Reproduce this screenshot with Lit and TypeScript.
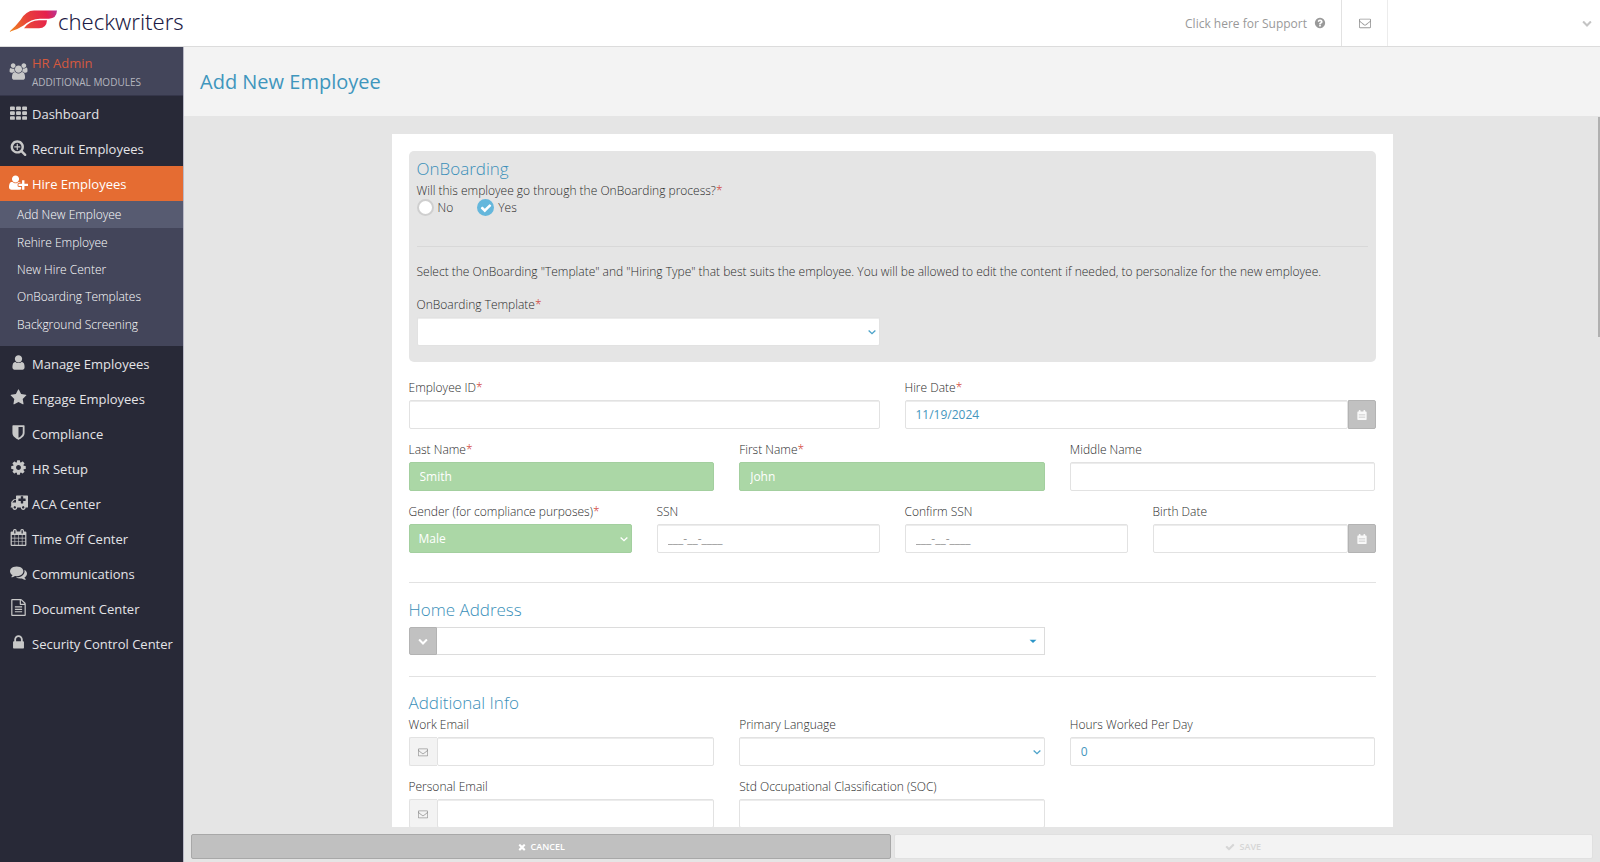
import { LitElement, html, css, svg, nothing } from "lit";
import { customElement, property, state } from "lit/decorators.js";
import { classMap } from "lit/directives/class-map.js";

interface Glyph {
  w: number;
  d: string;
}

const GLYPHS: Record<string, Glyph> = {
  group: {
    w: 2048,
    d: "M657 896q-162 5-265 128h-134q-82 0-138-40.5t-56-118.5q0-353 124-353 6 0 43.5 21t97.5 42.5 119 21.5q67 0 133-23-5 37-5 66 0 159 93 290zm1071 637q0 120-73 189.5t-194 69.5h-874q-121 0-194-69.5t-73-189.5q0-53 3.5-103.5t14-109 26.5-108.5 43-97.5 62-81 85.5-53.5 111.5-20q10 0 43 21.5t73 48 107 48 135 21.5 135-21.5 107-48 73-48 43-21.5q61 0 111.5 20t85.5 53.5 62 81 43 97.5 26.5 108.5 14 109 3.5 103.5zm-1024-1277q0 106-75 181t-181 75-181-75-75-181 75-181 181-75 181 75 75 181zm704 384q0 159-112.5 271.5t-271.5 112.5-271.5-112.5-112.5-271.5 112.5-271.5 271.5-112.5 271.5 112.5 112.5 271.5zm576 225q0 78-56 118.5t-138 40.5h-134q-103-123-265-128 93-131 93-290 0-29-5-66 66 23 133 23 59 0 119-21.5t97.5-42.5 43.5-21q124 0 124 353zm-128-609q0 106-75 181t-181 75-181-75-75-181 75-181 181-75 181 75 75 181z",
  },
  th: {
    w: 1792,
    d: "M96 256h320q96 0 96 96v192q0 96-96 96h-320q-96 0-96-96v-192q0-96 96-96zM736 256h320q96 0 96 96v192q0 96-96 96h-320q-96 0-96-96v-192q0-96 96-96zM1376 256h320q96 0 96 96v192q0 96-96 96h-320q-96 0-96-96v-192q0-96 96-96zM96 768h320q96 0 96 96v192q0 96-96 96h-320q-96 0-96-96v-192q0-96 96-96zM736 768h320q96 0 96 96v192q0 96-96 96h-320q-96 0-96-96v-192q0-96 96-96zM1376 768h320q96 0 96 96v192q0 96-96 96h-320q-96 0-96-96v-192q0-96 96-96zM96 1280h320q96 0 96 96v192q0 96-96 96h-320q-96 0-96-96v-192q0-96 96-96zM736 1280h320q96 0 96 96v192q0 96-96 96h-320q-96 0-96-96v-192q0-96 96-96zM1376 1280h320q96 0 96 96v192q0 96-96 96h-320q-96 0-96-96v-192q0-96 96-96z",
  },
  searchPlus: {
    w: 1792,
    d: "M1088 800v64q0 13-9.5 22.5t-22.5 9.5h-224v224q0 13-9.5 22.5t-22.5 9.5h-64q-13 0-22.5-9.5t-9.5-22.5v-224h-224q-13 0-22.5-9.5t-9.5-22.5v-64q0-13 9.5-22.5t22.5-9.5h224v-224q0-13 9.5-22.5t22.5-9.5h64q13 0 22.5 9.5t9.5 22.5v224h224q13 0 22.5 9.5t9.5 22.5zm128 32q0-185-131.5-316.5t-316.5-131.5-316.5 131.5-131.5 316.5 131.5 316.5 316.5 131.5 316.5-131.5 131.5-316.5zm512 832q0 53-37.5 90.5t-90.5 37.5q-54 0-90-38l-343-342q-179 124-399 124-143 0-273.5-55.5t-225-150-150-225-55.5-273.5 55.5-273.5 150-225 225-150 273.5-55.5 273.5 55.5 225 150 150 225 55.5 273.5q0 220-124 399l343 343q37 37 37 90z",
  },
  userPlus: {
    w: 2048,
    d: "M704 896q-159 0-271.5-112.5t-112.5-271.5 112.5-271.5 271.5-112.5 271.5 112.5 112.5 271.5-112.5 271.5-271.5 112.5zm960 128h352q13 0 22.5 9.5t9.5 22.5v192q0 13-9.5 22.5t-22.5 9.5h-352v352q0 13-9.5 22.5t-22.5 9.5h-192q-13 0-22.5-9.5t-9.5-22.5v-352h-352q-13 0-22.5-9.5t-9.5-22.5v-192q0-13 9.5-22.5t22.5-9.5h352v-352q0-13 9.5-22.5t22.5-9.5h192q13 0 22.5 9.5t9.5 22.5v352zm-736 224q0 52 38 90t90 38h256v238q-68 50-171 50h-874q-121 0-194-69t-73-190q0-53 3.5-103.5t14-109 26.5-108.5 43-97.5 62-81 85.5-53.5 111.5-20q19 0 39 17 79 61 154.5 91.5t164.5 30.5 164.5-30.5 154.5-91.5q20-17 39-17 132 0 217 96h-223q-52 0-90 38t-38 90v192z",
  },
  user: {
    w: 1792,
    d: "M1536 1399q0 109-62.5 187t-150.5 78h-854q-88 0-150.5-78t-62.5-187q0-85 8.5-160.5t31.5-152 58.5-131 94-89 134.5-34.5q131 128 313 128t313-128q76 0 134.5 34.5t94 89 58.5 131 31.5 152 8.5 160.5zm-256-887q0 159-112.5 271.5t-271.5 112.5-271.5-112.5-112.5-271.5 112.5-271.5 271.5-112.5 271.5 112.5 112.5 271.5z",
  },
  star: {
    w: 1792,
    d: "M1728 647q0 22-26 48l-363 354 86 500q1 7 1 20 0 21-10.5 35.5t-30.5 14.5q-19 0-40-12l-449-236-449 236q-22 12-40 12-21 0-31.5-14.5t-10.5-35.5q0-6 2-20l86-500-364-354q-25-27-25-48 0-37 56-46l502-73 225-455q19-41 49-41t49 41l225 455 502 73q56 9 56 46z",
  },
  shield: {
    w: 1792,
    d: "M1344 960v-640h-448v1137q119-63 213-137 235-184 235-360zm192-768v768q0 86-33.5 170.5t-83 150-118 127.5-126.5 103-121 77.5-89.5 49.5-42.5 20q-12 6-26 6t-26-6q-16-7-42.5-20t-89.5-49.5-121-77.5-126.5-103-118-127.5-83-150-33.5-170.5v-768q0-26 19-45t45-19h1152q26 0 45 19t19 45z",
  },
  cog: {
    w: 1792,
    d: "M1152 896q0-106-75-181t-181-75-181 75-75 181 75 181 181 75 181-75 75-181zm512-109v222q0 12-8 23t-20 13l-185 28q-19 54-39 91 35 50 107 138 10 12 10 25t-9 23q-27 37-99 108t-94 71q-12 0-26-9l-138-108q-44 23-91 38-16 136-29 186-7 28-36 28h-222q-14 0-24.5-8.5t-11.5-21.5l-28-184q-49-16-90-37l-141 107q-10 9-25 9-14 0-25-11-126-114-165-168-7-10-7-23 0-12 8-23 15-21 51-66.5t54-70.5q-27-50-41-99l-183-27q-13-2-21-12.5t-8-23.5v-222q0-12 8-23t19-13l186-28q14-46 39-92-40-57-107-138-10-12-10-24 0-10 9-23 26-36 98.5-107.5t94.5-71.5q13 0 26 10l138 107q44-23 91-38 16-136 29-186 7-28 36-28h222q14 0 24.5 8.5t11.5 21.5l28 184q49 16 90 37l142-107q9-9 24-9 13 0 25 10 129 119 165 170 7 8 7 22 0 12-8 23-15 21-51 66.5t-54 70.5q26 50 41 98l183 28q13 2 21 12.5t8 23.5z",
  },
  ambulance: {
    w: 1920,
    d: "M640 1408q0-52-38-90t-90-38-90 38-38 90 38 90 90 38 90-38 38-90zm-384-512h384v-256h-158q-14 2-22 9l-195 195q-7 12-9 22v30zm1280 512q0-52-38-90t-90-38-90 38-38 90 38 90 90 38 90-38 38-90zm128-704v-192q0-14-9-23t-23-9h-224v-224q0-14-9-23t-23-9h-192q-14 0-23 9t-9 23v224h-224q-14 0-23 9t-9 23v192q0 14 9 23t23 9h224v224q0 14 9 23t23 9h192q14 0 23-9t9-23v-224h224q14 0 23-9t9-23zm256-608v1280q0 26-19 45t-45 19h-192q0 106-75 181t-181 75-181-75-75-181h-384q0 106-75 181t-181 75-181-75-75-181h-128q-26 0-45-19t-19-45 19-45 45-19v-416q0-26 13-58t32-51l198-198q19-19 51-32t58-13h160v-320q0-26 19-45t45-19h1152q26 0 45 19t19 45z",
  },
  calendar: {
    w: 1792,
    d: "M192 1664h288v-288h-288v288zm352 0h320v-288h-320v288zm-352-352h288v-320h-288v320zm352 0h320v-320h-320v320zm-352-384h288v-288h-288v288zm736 736h320v-288h-320v288zm-384-736h320v-288h-320v288zm768 736h288v-288h-288v288zm-384-352h320v-320h-320v320zm-352-864v-288q0-13-9.5-22.5t-22.5-9.5h-64q-13 0-22.5 9.5t-9.5 22.5v288q0 13 9.5 22.5t22.5 9.5h64q13 0 22.5-9.5t9.5-22.5zm736 864h288v-320h-288v320zm-384-384h320v-288h-320v288zm384 0h288v-288h-288v288zm32-480v-288q0-13-9.5-22.5t-22.5-9.5h-64q-13 0-22.5 9.5t-9.5 22.5v288q0 13 9.5 22.5t22.5 9.5h64q13 0 22.5-9.5t9.5-22.5zm384-64v1280q0 52-38 90t-90 38h-1408q-52 0-90-38t-38-90v-1280q0-52 38-90t90-38h128v-96q0-66 47-113t113-47h64q66 0 113 47t47 113v96h384v-96q0-66 47-113t113-47h64q66 0 113 47t47 113v96h128q52 0 90 38t38 90z",
  },
  calendarSolid: {
    w: 1792,
    d: "M192 256h128v-128q0-128 128-128h64q128 0 128 128v128h512v-128q0-128 128-128h64q128 0 128 128v128h128q128 0 128 128v1280q0 128-128 128h-1408q-128 0-128-128v-1280q0-128 128-128zM320 800v140h1152v-140zM320 1200v140h1152v-140z",
  },
  comments: {
    w: 1792,
    d: "M1408 768q0 139-94 257t-256.5 186.5-353.5 68.5q-86 0-176-16-124 88-278 128-36 9-86 16h-3q-11 0-20.5-8t-11.5-21q-1-3-1-6.5t.5-6.5 2-6l2.5-5 3.5-5.5 4-5 4.5-5 4-4.5q5-6 23-25t26-29.5 22.5-29 25-38.5 20.5-44q-124-72-195-177t-71-224q0-139 94-257t256.5-186.5 353.5-68.5 353.5 68.5 256.5 186.5 94 257zm384 256q0 120-71 224.5t-195 176.5q10 24 20.5 44t25 38.5 22.5 29 26 29.5 23 25q1 1 4 4.5t4.5 5 4 5 3.5 5.5l2.5 5 2 6 .5 6.5-1 6.5q-3 14-13 22t-22 7q-50-7-86-16-154-40-278-128-90 16-176 16-271 0-472-132 58 4 88 4 161 0 309-45t264-129q125-92 192-212t67-254q0-77-23-152 129 71 204 178t75 230z",
  },
  fileText: {
    w: 1792,
    d: "M1596 380q28 28 48 76t20 88v1152q0 40-28 68t-68 28h-1344q-40 0-68-28t-28-68v-1600q0-40 28-68t68-28h896q40 0 88 20t76 48zm-444-244v376h376q-10-29-22-41l-313-313q-12-12-41-22zm384 1528v-1024h-416q-40 0-68-28t-28-68v-416h-768v1536h1280zm-1024-864q0-14 9-23t23-9h704q14 0 23 9t9 23v64q0 14-9 23t-23 9h-704q-14 0-23-9t-9-23v-64zm736 224q14 0 23 9t9 23v64q0 14-9 23t-23 9h-704q-14 0-23-9t-9-23v-64q0-14 9-23t23-9h704zm0 256q14 0 23 9t9 23v64q0 14-9 23t-23 9h-704q-14 0-23-9t-9-23v-64q0-14 9-23t23-9h704z",
  },
  lock: {
    w: 1792,
    d: "M640 768h512v-192q0-106-75-181t-181-75-181 75-75 181v192zm832 96v576q0 40-28 68t-68 28h-960q-40 0-68-28t-28-68v-576q0-40 28-68t68-28h32v-192q0-184 132-316t316-132 316 132 132 316v192h32q40 0 68 28t28 68z",
  },
  question: {
    w: 1792,
    d: "M1024 1376v-192q0-14-9-23t-23-9h-192q-14 0-23 9t-9 23v192q0 14 9 23t23 9h192q14 0 23-9t9-23zm256-672q0-88-55.5-163t-138.5-116-170-41q-243 0-371 213-15 24 8 42l132 100q7 6 19 6 16 0 25-12 53-68 86-92 34-24 86-24 48 0 85.5 26t37.5 59q0 38-20 61t-68 45q-63 28-115.5 86.5t-52.5 125.5v36q0 14 9 23t23 9h192q14 0 23-9t9-23q0-19 21.5-49.5t54.5-49.5q32-18 49-28.5t46-35 44.5-48 28-60.5 12.5-81zm384 192q0 209-103 385.5t-279.5 279.5-385.5 103-385.5-103-279.5-279.5-103-385.5 103-385.5 279.5-279.5 385.5-103 385.5 103 279.5 279.5 103 385.5z",
  },
  envelope: {
    w: 1792,
    d: "M1664 1504v-768q-32 36-69 66-268 206-426 338-51 43-83 67t-86.5 48.5-102.5 24.5h-2q-48 0-102.5-24.5t-86.5-48.5-83-67q-158-132-426-338-37-30-69-66v768q0 13 9.5 22.5t22.5 9.5h1472q13 0 22.5-9.5t9.5-22.5zm0-1051v-24.5l-.5-13-3-12.5-5.5-9-9-7.5-14-2.5h-1472q-13 0-22.5 9.5t-9.5 22.5q0 168 147 284 193 152 401 317 6 5 35 29.5t46 37.5 44.5 31.5 50.5 27.5 43 9h2q20 0 43-9t50.5-27.5 44.5-31.5 46-37.5 35-29.5q208-165 401-317 54-43 100.5-115.5t46.5-131.5zm128-37v1088q0 66-47 113t-113 47h-1472q-66 0-113-47t-47-113v-1088q0-66 47-113t113-47h1472q66 0 113 47t47 113z",
  },
  chevron: {
    w: 1792,
    d: "M1683 808l-742 741q-19 19-45 19t-45-19l-742-741q-19-19-19-45.5t19-45.5l166-165q19-19 45-19t45 19l531 531 531-531q19-19 45-19t45 19l166 165q19 19 19 45.5t-19 45.5z",
  },
  angle: {
    w: 1792,
    d: "M40 660L240 460L896 1080L1552 460L1752 660L896 1480z",
  },
  caret: {
    w: 1792,
    d: "M128 640h1536L896 1344z",
  },
  check: {
    w: 1792,
    d: "M1671 566q0 40-28 68l-724 724-136 136q-28 28-68 28t-68-28l-136-136-362-362q-28-28-28-68t28-68l136-136q28-28 68-28t68 28l294 295 656-657q28-28 68-28t68 28l136 136q28 28 28 68z",
  },
  times: {
    w: 1792,
    d: "M1490 1322q0 40-28 68l-136 136q-28 28-68 28t-68-28l-294-294-294 294q-28 28-68 28t-68-28l-136-136q-28-28-28-68t28-68l294-294-294-294q-28-28-28-68t28-68l136-136q28-28 68-28t68 28l294 294 294-294q28-28 68-28t68 28l136 136q28 28 28 68t-28 68l-294 294 294 294q28 28 28 68z",
  },
};

@customElement("cw-icon")
class CwIcon extends LitElement {
  static styles = css`
    :host {
      display: inline-flex;
      flex: none;
    }
    .glyph {
      display: block;
      fill: currentColor;
      fill-rule: evenodd;
      overflow: visible;
    }
  `;
  @property() name = "check";
  @property({ type: Number }) size = 14;

  render() {
    const g = GLYPHS[this.name];
    return html`<svg
      class="glyph"
      aria-hidden="true"
      width=${Math.round((g.w * this.size) / 1792)}
      height=${this.size}
      viewBox="0 0 ${g.w} 1792"
    >
      ${svg`<path d=${g.d}></path>`}
    </svg>`;
  }
}

@customElement("cw-sidebar")
class CwSidebar extends LitElement {
  static styles = css`
    :host {
      display: block;
      background: #282937;
      border-right: 1px solid #b9b9c6;
      overflow: hidden;
    }
    .module {
      display: flex;
      align-items: center;
      width: 100%;
      height: 49px;
      padding: 3px 0 0 8px;
      border: 0;
      border-bottom: 1px solid #35364a;
      background: #43455a;
      font-family: inherit;
      text-align: left;
    }
    .module cw-icon,
    .item cw-icon {
      justify-content: center;
      width: 21px;
      margin-right: 3px;
      color: #c8c8c8;
    }
    .module cw-icon {
      margin-bottom: 2px;
    }
    .module-text {
      display: grid;
    }
    .module-name {
      font-size: 13px;
      line-height: 20px;
      color: #d5593e;
    }
    .module-sub {
      font-size: 10px;
      line-height: 19px;
      color: #b4b5be;
    }
    ul {
      list-style: none;
      margin: 0;
      padding: 0;
    }
    a {
      color: inherit;
      text-decoration: none;
    }
    .item {
      box-sizing: border-box;
      display: flex;
      align-items: center;
      height: 35px;
      padding: 1px 0 0 8px;
      font-size: 13px;
      color: #e4e4e7;
      white-space: nowrap;
    }
    .item cw-icon {
      margin-bottom: 4px;
    }
    .item.open {
      background: #e56c32;
      color: #fff;
    }
    .item.open cw-icon {
      color: #fff;
    }
    .sub {
      display: grid;
      grid-auto-rows: 1fr;
      min-height: 137px;
      padding-bottom: 8px;
      background: #43455a;
      font-size: 12px;
      font-weight: 300;
      color: #fff;
    }
    .sub li {
      display: grid;
    }
    .sub a {
      display: flex;
      align-items: center;
      padding-left: 17px;
    }
    .sub a.current {
      background: #575b71;
    }
  `;

  private items = [
    ["th", "Dashboard"],
    ["searchPlus", "Recruit Employees"],
    ["userPlus", "Hire Employees"],
    ["user", "Manage Employees"],
    ["star", "Engage Employees"],
    ["shield", "Compliance"],
    ["cog", "HR Setup"],
    ["ambulance", "ACA Center"],
    ["calendar", "Time Off Center"],
    ["comments", "Communications"],
    ["fileText", "Document Center"],
    ["lock", "Security Control Center"],
  ];
  private subItems = [
    "Add New Employee",
    "Rehire Employee",
    "New Hire Center",
    "OnBoarding Templates",
    "Background Screening",
  ];
  @state() private open = "Hire Employees";

  render() {
    return html`
      <button class="module" type="button">
        <cw-icon name="group" .size=${17}></cw-icon>
        <span class="module-text">
          <span class="module-name">HR Admin</span>
          <span class="module-sub">ADDITIONAL MODULES</span>
        </span>
      </button>
      <nav aria-label="Modules">
        <ul>
          ${this.items.map(
            ([icon, label]) => html`<li>
              <a
                href="#"
                class=${classMap({ item: true, open: label === this.open })}
                ><cw-icon name=${icon} .size=${17}></cw-icon
                >${label}</a
              >
              ${label === this.open
                ? html`<ul class="sub">
                    ${this.subItems.map(
                      (s, i) =>
                        html`<li>
                          <a href="#" class=${classMap({ current: i === 0 })}>${s}</a>
                        </li>`
                    )}
                  </ul>`
                : nothing}
            </li>`
          )}
        </ul>
      </nav>
    `;
  }
}

type Kind = "text" | "select" | "date" | "email" | "number";

@customElement("cw-field")
class CwField extends LitElement {
  static styles = css`
    :host {
      display: grid;
      gap: 4px;
      min-width: 0;
    }
    label {
      font-size: 12px;
      line-height: 17px;
      white-space: nowrap;
    }
    .star {
      color: #d0342c;
    }
    .control {
      display: flex;
      position: relative;
      height: 29px;
    }
    .box {
      box-sizing: border-box;
      flex: 1;
      min-width: 0;
      height: 100%;
      margin: 0;
      padding: 0 10px;
      border: 1px solid #e2e2e2;
      border-radius: 2px;
      background: #fff;
      box-shadow: inset 0 1px 0 #ececec;
      font-family: inherit;
      font-size: 12px;
      color: #4596bd;
      appearance: none;
      outline: none;
    }
    .box::placeholder {
      color: #999;
      opacity: 1;
    }
    .box.done {
      border-color: #a3cf9f;
      background: #abd7a6;
      box-shadow: none;
      color: #fff;
    }
    select.box {
      padding: 0 9px;
    }
    .arrow {
      position: absolute;
      right: 4px;
      top: 11px;
      color: #4da3ca;
      pointer-events: none;
    }
    .arrow.light {
      color: #fff;
    }
    .addon {
      box-sizing: border-box;
      display: grid;
      place-items: center;
      width: 28px;
      height: 100%;
      padding: 0;
    }
    .addon.date {
      border: 1px solid #b3b3b3;
      border-radius: 0 2px 2px 0;
      background: #c1c1c1;
      color: #f8f8f8;
    }
    .addon.mail {
      border: 1px solid #e2e2e2;
      border-right: 0;
      border-radius: 2px 0 0 2px;
      background: #f3f3f3;
      color: #999;
    }
  `;
  @property() label = "";
  @property() value = "";
  @property() kind: Kind = "text";
  @property() hint = "";
  @property({ type: Boolean }) required = false;
  @property({ type: Boolean }) done = false;

  render() {
    const cls = classMap({ box: true, done: this.done });
    return html`
      <label for="f">${this.label}${this.required ? html`<span class="star">*</span>` : nothing}</label>
      <div class="control">
        ${this.kind === "email"
          ? html`<span class="addon mail"><cw-icon name="envelope" .size=${10}></cw-icon></span>`
          : nothing}
        ${this.kind === "select"
          ? html`<select id="f" class=${cls}>
                <option>${this.value}</option>
              </select>
              <cw-icon
                class=${classMap({ arrow: true, light: this.done })}
                name="angle"
                .size=${8}
              ></cw-icon>`
          : html`<input
              id="f"
              class=${cls}
              type=${this.kind === "email" ? "email" : "text"}
              inputmode=${this.kind === "number" ? "decimal" : "text"}
              placeholder=${this.hint}
              .value=${this.value}
            />`}
        ${this.kind === "date"
          ? html`<button class="addon date" type="button" aria-label="Open calendar">
              <cw-icon name="calendarSolid" .size=${10}></cw-icon>
            </button>`
          : nothing}
      </div>
    `;
  }
}

@customElement("app-root")
class AppRoot extends LitElement {
  static styles = css`
    :host {
      display: grid;
      grid-template: auto minmax(0, 1fr) / 184px minmax(0, 1fr);
      height: 100vh;
      font-family: "Open Sans", "Noto Sans", sans-serif;
      font-size: 12px;
      color: #555;
      background: #e5e5e5;
    }
    .top {
      grid-column: 1 / -1;
      display: flex;
      height: 46px;
      border-bottom: 1px solid #dcdcdc;
      background: #fff;
      color: #999;
    }
    .brand {
      display: flex;
      align-items: center;
      margin-right: auto;
      padding: 0 0 4px 9px;
      font-family: "Noto Sans", "Open Sans", sans-serif;
      font-size: 22px;
      font-weight: 300;
      line-height: 30px;
      color: #1d1b45;
      text-decoration: none;
    }
    .support {
      display: flex;
      align-items: center;
      gap: 7px;
      padding-right: 15px;
      border-right: 1px solid #e2e2e2;
      color: inherit;
      text-decoration: none;
    }
    .top-btn {
      display: grid;
      align-items: center;
      justify-content: center;
      width: 46px;
      padding: 0;
      border: 0;
      border-right: 1px solid #ececec;
      background: none;
      color: #999;
    }
    .account {
      justify-content: end;
      width: 212px;
      padding-right: 8px;
      border: 0;
      color: #c4c4c4;
    }
    main {
      display: grid;
      grid-template-rows: 69px minmax(0, 1fr) auto;
      min-height: 0;
      font-weight: 300;
      color: #2c2c2c;
    }
    h1 {
      display: flex;
      align-items: center;
      margin: 0;
      padding: 0 16px;
      background: #f3f3f3;
      font-size: 20px;
      line-height: 28px;
      font-weight: 400;
      color: #3f96bd;
    }
    .scroll {
      position: relative;
      overflow: hidden;
    }
    .thumb {
      position: absolute;
      top: 1px;
      right: 0;
      width: 2px;
      height: 31%;
      background: #b0b0b0;
    }
    .card {
      box-sizing: border-box;
      max-width: 1001px;
      margin: 18px auto 0;
      padding: 17px;
      background: #fff;
    }
    .panel {
      padding: 6px 8px 16px;
      border-radius: 5px;
      background: #e5e5e5;
    }
    h2 {
      margin: 0;
      font-size: 17px;
      line-height: 24px;
      font-weight: 300;
      color: #3a8fb9;
    }
    .panel h2,
    .info h2 {
      margin-bottom: 1px;
    }
    fieldset {
      margin: 0;
      padding: 0;
      border: 0;
    }
    legend {
      padding: 0;
      line-height: 17px;
    }
    .star {
      color: #d0342c;
    }
    .radios {
      display: flex;
      gap: 24px;
    }
    .radio {
      display: grid;
      grid-template-columns: 17px auto;
      column-gap: 4px;
      align-items: center;
      justify-items: center;
      line-height: 17px;
    }
    .radio input {
      grid-area: 1 / 1;
      box-sizing: border-box;
      width: 17px;
      height: 17px;
      margin: 0;
      border: 2px solid #cfcfcf;
      border-radius: 50%;
      background: #fff;
      appearance: none;
    }
    .radio input:checked {
      border-color: #65b7dc;
      background: #65b7dc;
    }
    .radio cw-icon {
      grid-area: 1 / 1;
      z-index: 1;
      color: #fff;
      pointer-events: none;
    }
    hr {
      width: 100%;
      height: 1px;
      margin: 0;
      border: 0;
      background: #e2e2e2;
    }
    .panel hr {
      margin: 30px 0 16px;
      background: #d8d8d8;
    }
    .note {
      margin: 0 0 16px;
      line-height: 17px;
    }
    .row {
      display: grid;
      gap: 12px 25px;
      margin-bottom: 12px;
    }
    .panel .row {
      margin: 0;
    }
    .c2 {
      grid-template-columns: repeat(2, minmax(0, 1fr));
    }
    .c3 {
      grid-template-columns: repeat(3, minmax(0, 1fr));
    }
    .c4 {
      grid-template-columns: repeat(4, minmax(0, 1fr));
    }
    .fields {
      padding: 17px 0;
    }
    .address {
      padding: 15px 0 21px;
    }
    .info {
      padding-top: 14px;
    }
    .combo {
      position: relative;
      grid-column: span 2;
      display: flex;
      height: 28px;
      margin-top: 5px;
    }
    .address .row {
      margin: 0;
    }
    .combo-btn {
      display: grid;
      place-items: center;
      width: 28px;
      padding: 0;
      border: 1px solid #b3b3b3;
      border-radius: 2px 0 0 2px;
      background: #c1c1c1;
      color: #fff;
    }
    .combo-input {
      box-sizing: border-box;
      flex: 1;
      min-width: 0;
      padding: 0 24px 0 8px;
      border: 1px solid #dcdcdc;
      border-left: 0;
      background: #fff;
      font-family: inherit;
      font-size: 12px;
      color: #4596bd;
      outline: none;
    }
    .combo-caret {
      position: absolute;
      right: 8px;
      top: 10px;
      color: #2d96c8;
      pointer-events: none;
    }
    .actions {
      display: grid;
      grid-template-columns: repeat(2, minmax(0, 1fr));
      gap: 3px;
      padding: 7px 7px 3px;
    }
    .action {
      display: flex;
      align-items: center;
      justify-content: center;
      gap: 4px;
      height: 25px;
      padding: 0;
      border: 1px solid #a8a8a8;
      border-radius: 2px;
      background: #c0c0c0;
      font-family: inherit;
      font-size: 9px;
      font-weight: 600;
      color: #fff;
    }
    .action:disabled {
      border-color: #e0e0e0;
      background: #f3f3f3;
      color: #d6d6d6;
    }
  `;

  @state() private onboarding = true;

  render() {
    return html`
      <header class="top">
        <a class="brand" href="#">
          <svg width="49" height="22" viewBox="0 0 49 22" aria-hidden="true">
            <defs>
              <linearGradient id="lg" gradientUnits="userSpaceOnUse" x1="0" y1="22" x2="50" y2="4">
                <stop offset="0" stop-color="#f08a1d" />
                <stop offset="0.4" stop-color="#e8413a" />
                <stop offset="0.78" stop-color="#e5204d" />
                <stop offset="1" stop-color="#b5359b" />
              </linearGradient>
            </defs>
            <path
              fill="url(#lg)"
              d="M0 22Q7 16 11.500 10Q17 0.500 25 0.500H48Q47.500 8.500 40 8.700H31Q22 9 14.500 15.500Q8 20 0 22Z"
            />
            <path fill="url(#lg)" d="M15 18.300Q21 10.300 30 10.300H38Q37.500 18.300 30 18.300Z" />
          </svg>
          checkwriters
        </a>
        <a class="support" href="#"
          >Click here for Support<cw-icon name="question" .size=${12}></cw-icon
        ></a>
        <button class="top-btn" type="button" aria-label="Messages">
          <cw-icon name="envelope" .size=${12}></cw-icon>
        </button>
        <button class="top-btn account" type="button" aria-label="Account menu">
          <cw-icon name="chevron" .size=${10}></cw-icon>
        </button>
      </header>
      <cw-sidebar></cw-sidebar>
      <main>
        <h1>Add New Employee</h1>
        <div class="scroll">
          <form class="card" @submit=${(e: Event) => e.preventDefault()}>
            <section class="panel">
              <h2>OnBoarding</h2>
              <fieldset>
                <legend>
                  Will this employee go through the OnBoarding process?<span class="star">*</span>
                </legend>
                <div class="radios">
                  <label class="radio">
                    <input
                      type="radio"
                      name="onboarding"
                      .checked=${!this.onboarding}
                      @change=${() => (this.onboarding = false)}
                    />
                    ${this.onboarding ? nothing : html`<cw-icon name="check" .size=${12}></cw-icon>`}
                    <span>No</span>
                  </label>
                  <label class="radio">
                    <input
                      type="radio"
                      name="onboarding"
                      .checked=${this.onboarding}
                      @change=${() => (this.onboarding = true)}
                    />
                    ${this.onboarding ? html`<cw-icon name="check" .size=${12}></cw-icon>` : nothing}
                    <span>Yes</span>
                  </label>
                </div>
              </fieldset>
              <hr />
              <p class="note">
                Select the OnBoarding "Template" and "Hiring Type" that best suits the employee. You
                will be allowed to edit the content if needed, to personalize for the new employee.
              </p>
              <div class="row c2">
                <cw-field label="OnBoarding Template" kind="select" required></cw-field>
              </div>
            </section>

            <section class="fields">
              <div class="row c2">
                <cw-field label="Employee ID" required></cw-field>
                <cw-field label="Hire Date" kind="date" value="11/19/2024" required></cw-field>
              </div>
              <div class="row c3">
                <cw-field label="Last Name" value="Smith" required done></cw-field>
                <cw-field label="First Name" value="John" required done></cw-field>
                <cw-field label="Middle Name"></cw-field>
              </div>
              <div class="row c4">
                <cw-field
                  label="Gender (for compliance purposes)"
                  kind="select"
                  value="Male"
                  required
                  done
                ></cw-field>
                <cw-field label="SSN" hint="___-__-____"></cw-field>
                <cw-field label="Confirm SSN" hint="___-__-____"></cw-field>
                <cw-field label="Birth Date" kind="date"></cw-field>
              </div>
            </section>
            <hr />

            <section class="address">
              <h2 id="addr">Home Address</h2>
              <div class="row c3">
                <div class="combo">
                  <button class="combo-btn" type="button" aria-label="Address options">
                    <cw-icon name="chevron" .size=${10}></cw-icon>
                  </button>
                  <input class="combo-input" type="text" role="combobox" aria-labelledby="addr" />
                  <cw-icon class="combo-caret" name="caret" .size=${8}></cw-icon>
                </div>
              </div>
            </section>
            <hr />

            <section class="info">
              <h2>Additional Info</h2>
              <div class="row c3">
                <cw-field label="Work Email" kind="email"></cw-field>
                <cw-field label="Primary Language" kind="select"></cw-field>
                <cw-field label="Hours Worked Per Day" kind="number" value="0"></cw-field>
                <cw-field label="Personal Email" kind="email"></cw-field>
                <cw-field label="Std Occupational Classification (SOC)"></cw-field>
              </div>
            </section>
          </form>
          <div class="thumb"></div>
        </div>
        <footer class="actions">
          <button class="action" type="button">
            <cw-icon name="times" .size=${10}></cw-icon>CANCEL
          </button>
          <button class="action" type="button" disabled>
            <cw-icon name="check" .size=${10}></cw-icon>SAVE
          </button>
        </footer>
      </main>
    `;
  }
}
